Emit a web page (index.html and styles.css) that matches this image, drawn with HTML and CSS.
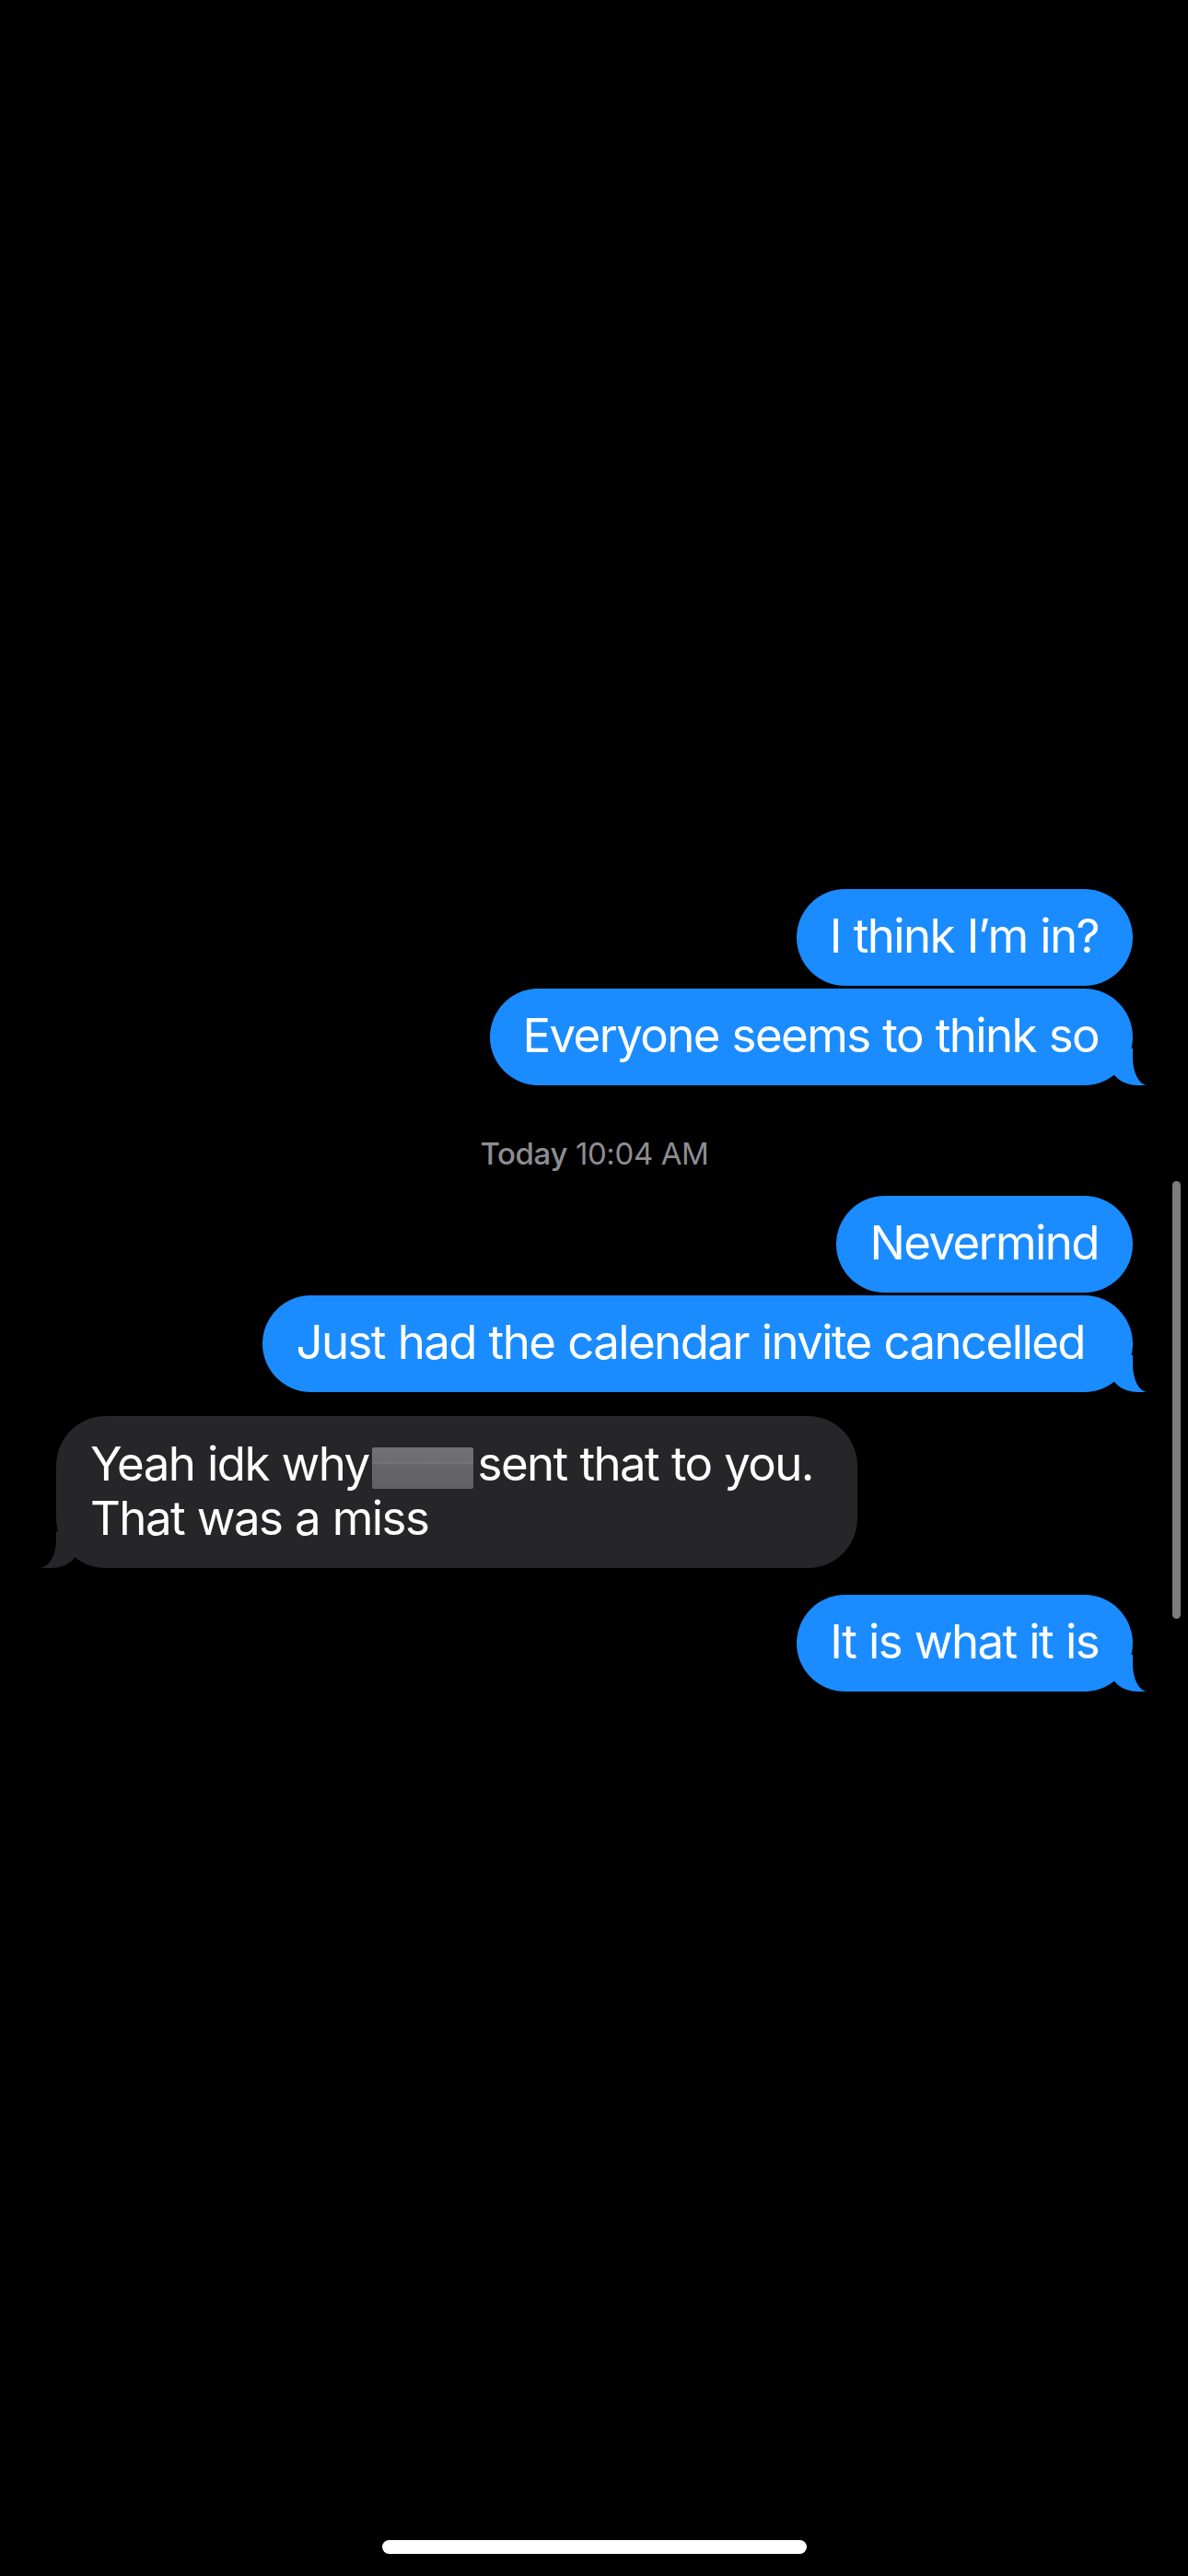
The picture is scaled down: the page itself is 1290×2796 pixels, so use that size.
FILE: index.html
```html
<!DOCTYPE html>
<html lang="en">
<head>
    <meta charset="UTF-8">
    <meta name="viewport" content="width=device-width, initial-scale=1.0">
    <title>Messages</title>
    <link rel="stylesheet" href="styles.css">
</head>
<body>
    <div class="screen">
        <div class="thread">
            <div class="msg sent">I think I’m in?</div>
            <div class="msg sent next tail">Everyone seems to think so</div>

            <div class="stamp"><span class="day">Today</span> 10:04 AM</div>

            <div class="msg sent first">Nevermind</div>
            <div class="msg sent next tail wide">Just had the calendar invite cancelled</div>

            <div class="msg received tail long">Yeah idk why<span class="redacted"></span>sent that to you.<br>That was a miss</div>

            <div class="msg sent tail last">It is what it is</div>
        </div>

        <div class="scrollbar"></div>

        <div class="home-bar"></div>
    </div>
</body>
</html>
```

FILE: styles.css
```css
body {
    margin: 0;
    background-color: #000;
    font-family: 'Inter', 'Noto Sans', sans-serif;
    overflow: hidden;
}

.screen {
    position: relative;
    height: 2796px;
    display: flex;
    flex-direction: column;
}

.thread {
    display: flex;
    flex-direction: column;
    padding: 965px 60px 0 61px;
}

.msg {
    position: relative;
    box-sizing: border-box;
    padding: 21px 37px 25px 36px;
    border-radius: 54px;
    font-size: 51px;
    line-height: 59px;
    letter-spacing: -1.6px;
    word-spacing: 1px;
    color: #fff;
}

.sent {
    align-self: flex-end;
    background-color: #1a8cff;
}

.received {
    align-self: flex-start;
    background-color: #262628;
    margin-top: 26px;
}

.next {
    margin-top: 3px;
}

.first {
    margin-top: 26px;
}

.last {
    margin-top: 29px;
}

.wide {
    padding-right: 52px;
}

.long {
    width: 870px;
    padding-top: 22px;
    padding-left: 37px;
}

/* bubble tails */
.sent.tail::before {
    content: "";
    position: absolute;
    right: -15px;
    bottom: 0;
    width: 40px;
    height: 40px;
    background-color: #1a8cff;
    border-bottom-left-radius: 30px 25px;
}

.sent.tail::after {
    content: "";
    position: absolute;
    right: -45px;
    bottom: 0;
    width: 45px;
    height: 42px;
    background-color: #000;
    border-bottom-left-radius: 16px 30px;
}

.received.tail::before {
    content: "";
    position: absolute;
    left: -18px;
    bottom: 0;
    width: 43px;
    height: 40px;
    background-color: #262628;
    border-bottom-right-radius: 30px 25px;
}

.received.tail::after {
    content: "";
    position: absolute;
    left: -45px;
    bottom: 0;
    width: 45px;
    height: 42px;
    background-color: #000;
    border-bottom-right-radius: 19px 30px;
}

.redacted {
    display: inline-block;
    width: 110px;
    height: 45px;
    margin: 0 5px -9px 3px;
    background: linear-gradient(#727274 0, #6d6d6f 36%, #7c7c7e 37%, #666668 40%, #616163 100%);
    border-radius: 2px;
}

.stamp {
    align-self: center;
    margin-top: 54px;
    font-size: 33px;
    line-height: 40px;
    letter-spacing: -0.4px;
    color: #8d8d92;
}

.day {
    font-weight: 500;
}

.scrollbar {
    position: absolute;
    top: 1282px;
    right: 8px;
    width: 9px;
    height: 475px;
    border-radius: 5px;
    background-color: #7d7d7d;
}

.home-bar {
    align-self: center;
    margin-top: auto;
    margin-bottom: 24px;
    width: 461px;
    height: 15px;
    border-radius: 8px;
    background-color: #fff;
}
```
